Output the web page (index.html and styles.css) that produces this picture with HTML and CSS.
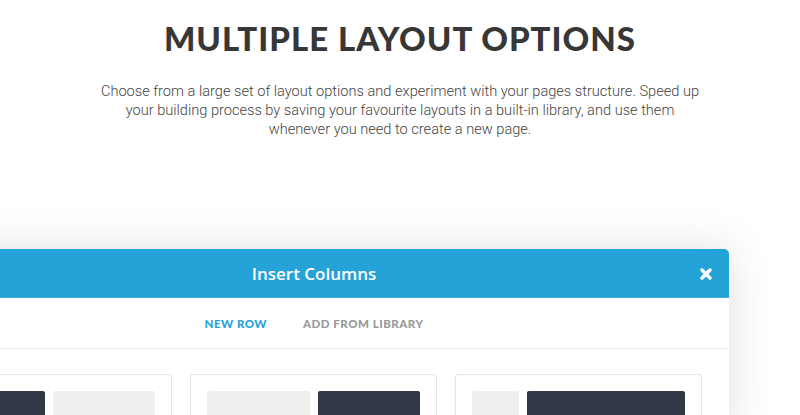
FILE: index.html
```html
<!DOCTYPE html>
<html lang="en">
<head>
	<meta charset="UTF-8">
	<title>Multiple Layout Options</title>
	<link rel="stylesheet" href="styles.css">
</head>
<body>
	<div class='intro'>
		<h1 class='title'>MULTIPLE LAYOUT OPTIONS</h1>
		<p class='lead'>Choose from a large set of layout options and experiment with your pages structure. Speed up your building process by saving your favourite layouts in a built-in library, and use them whenever you need to create a new page.</p>
	</div>
	<div class='modal'>
		<div class='modal-head'>
			<span class='modal-title'>Insert Columns</span>
			<a href='#' class='close'>
				<svg width="12" height="12" viewBox="0 0 12 12"><path d="M2 2L10 10M10 2L2 10" stroke="#fff" stroke-width="3.4" stroke-linecap="round"/></svg>
			</a>
		</div>
		<ul class='tabs'>
			<li class='on'>NEW ROW</li>
			<li>ADD FROM LIBRARY</li>
		</ul>
		<div class='cards'>
			<div class='card'>
				<div class='col dark half'></div>
				<div class='col light half'></div>
			</div>
			<div class='card'>
				<div class='col light half'></div>
				<div class='col dark half'></div>
			</div>
			<div class='card'>
				<div class='col light quarter'></div>
				<div class='col dark rest'></div>
			</div>
		</div>
	</div>
</body>
</html>
```

FILE: styles.css
```css
*{
	padding: 0;
	margin: 0;
	box-sizing: border-box;
}
body{
	width: 800px;
	height: 415px;
	overflow: hidden;
	background: #fff;
}
.intro{
	text-align: center;
	padding-top: 18px;
}
.title{
	font-family: "Lato", "Liberation Sans", sans-serif;
	font-weight: 900;
	font-size: 33px;
	line-height: 40px;
	letter-spacing: 1px;
	color: #373737;
}
.lead{
	width: 610px;
	margin: 24px auto 0;
	font-family: "Roboto", "Liberation Sans", sans-serif;
	font-weight: 300;
	font-size: 14.6px;
	line-height: 19px;
	color: #444;
}
.modal{
	width: 830px;
	margin: 110px 0 0 -101px;
	background: #fff;
	border-radius: 5px 5px 0 0;
	box-shadow: 0 0 45px rgba(0,0,0,0.13);
}
.modal-head{
	position: relative;
	height: 49px;
	display: flex;
	align-items: center;
	justify-content: center;
	background: #25a3d8;
	border-radius: 5px 5px 0 0;
	border-bottom: 1px solid #3bb0e0;
}
.modal-title{
	font-family: "Open Sans", "Liberation Sans", sans-serif;
	font-weight: 600;
	font-size: 17px;
	color: #fff;
}
.close{
	position: absolute;
	right: 17px;
	top: 19px;
	display: block;
	width: 12px;
	height: 12px;
}
.close svg{
	display: block;
}
.tabs{
	height: 51px;
	display: flex;
	align-items: center;
	justify-content: center;
	gap: 36px;
	list-style: none;
	border-bottom: 1px solid #ececec;
}
.tabs li{
	font-family: "Lato", "Liberation Sans", sans-serif;
	font-weight: 900;
	font-size: 11.5px;
	letter-spacing: 0.5px;
	color: #999;
}
.tabs .on{
	color: #25a3d8;
}
.cards{
	display: flex;
	gap: 18px;
	padding: 25px 26px 0;
}
.card{
	width: 247px;
	height: 60px;
	display: flex;
	gap: 8px;
	padding: 16px 16px 0;
	border: 1.5px solid #e5e5e5;
	border-bottom: 0;
	border-radius: 4px 4px 0 0;
}
.col{
	height: 44px;
	border-radius: 2px 2px 0 0;
}
.dark{
	background: #333846;
}
.light{
	background: #efefef;
}
.half{
	flex: 1;
}
.quarter{
	width: 47px;
}
.rest{
	flex: 1;
}
```
